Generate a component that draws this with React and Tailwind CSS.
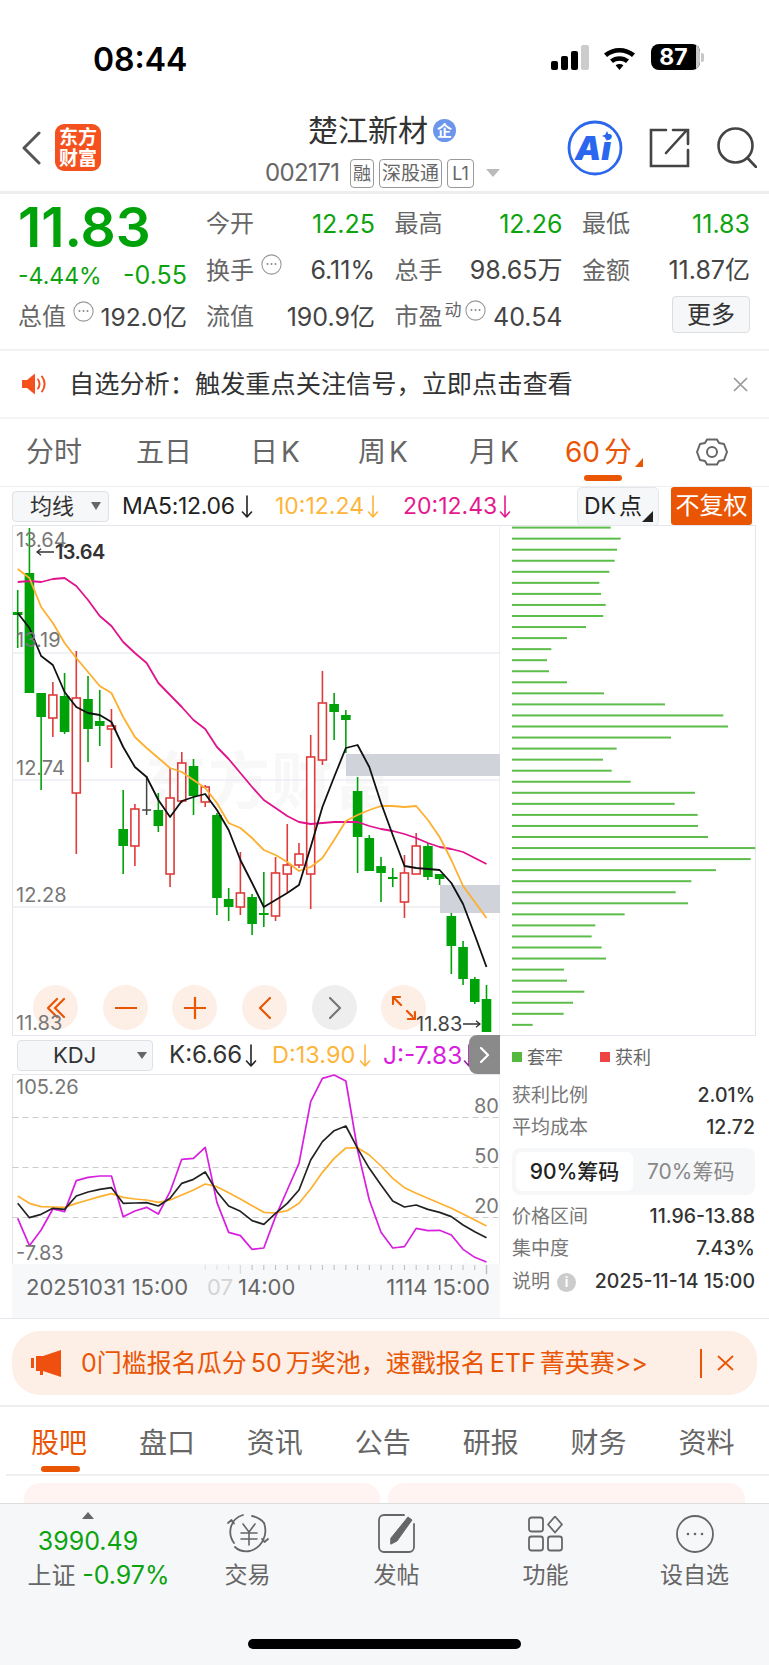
import React from "react";

const UP = "#df3b3b";
const DOWN = "#00a20a";
const ORANGE = "#ea5504";
const slot = (i) => 17.7 + 11.72 * i;

// wickTop, wickBottom, bodyTop, bodyBottom, kind (d = falling, u = rising, x = flat)
const candles = [
  [590, 648, 612, 615, "d"], [528, 693, 573, 693, "d"], [693, 790, 693, 717, "d"], [682, 737, 695, 718, "u"],
  [673, 734, 696, 732, "d"], [651, 854, 698, 793, "u"], [676, 762, 699, 729, "d"], [690, 746, 721, 726, "d"],
  [709, 768, 726, 729, "u"], [790, 874, 829, 846, "d"], [804, 866, 809, 846, "u"], [776, 815, 810, 811, "x"],
  [793, 832, 810, 826, "d"], [768, 887, 798, 874, "u"], [752, 803, 763, 801, "u"], [759, 815, 766, 796, "d"],
  [785, 807, 787, 802, "u"], [813, 915, 815, 898, "d"], [888, 921, 899, 907, "d"], [852, 915, 893, 907, "u"],
  [894, 935, 897, 924, "d"], [872, 927, 913, 915, "d"], [857, 921, 873, 916, "u"], [824, 893, 865, 874, "u"],
  [843, 868, 854, 865, "u"], [735, 909, 757, 874, "u"], [671, 765, 703, 760, "u"], [693, 740, 704, 712, "d"],
  [710, 753, 715, 720, "d"], [777, 873, 791, 837, "d"], [835, 871, 838, 871, "d"], [857, 902, 866, 873, "d"],
  [868, 887, 877, 879, "d"], [855, 918, 873, 902, "u"], [833, 874, 846, 874, "u"], [843, 880, 846, 877, "d"],
  [874, 885, 874, 879, "d"], [913, 974, 916, 946, "d"], [941, 985, 947, 979, "d"], [977, 1004, 979, 1002, "d"],
  [985, 1032, 999, 1032, "d"],
];

const ma5 = [613, 628, 656, 665, 692, 707, 713, 715, 722, 747, 767, 777, 800, 817, 801, 797, 794, 810, 830, 860, 883, 907, 900, 893, 885, 847, 807, 777, 748, 745, 767, 803, 835, 866, 868, 869, 870, 883, 904, 935, 967];
const ma10 = [569, 578, 607, 623, 643, 658, 672, 686, 693, 717, 737, 748, 758, 768, 772, 780, 788, 803, 823, 828, 838, 850, 855, 862, 871, 867, 858, 840, 821, 815, 810, 806, 806, 807, 806, 820, 837, 860, 886, 902, 918];
const ma20 = [582, 581, 582, 579, 578, 586, 600, 616, 626, 642, 653, 663, 683, 695, 707, 720, 729, 747, 759, 773, 787, 800, 808, 816, 822, 824, 823, 822, 822, 822, 826, 829, 831, 834, 838, 843, 847, 849, 852, 858, 864];

const kLine = [490, 533, 523, 505, 508, 468, 456, 448, 443, 490, 489, 488, 498, 475, 430, 418, 396, 455, 498, 514, 542, 553, 520, 490, 450, 360, 305, 272, 258, 325, 385, 435, 483, 501, 495, 508, 517, 530, 555, 575, 593];
const dLine = [468, 490, 500, 501, 502, 490, 480, 470, 461, 472, 477, 480, 487, 480, 465, 450, 432, 440, 458, 477, 497, 517, 519, 512, 490, 447, 397, 355, 324, 323, 345, 378, 415, 443, 460, 475, 490, 505, 522, 540, 558];
const jLine = [535, 617, 570, 507, 515, 422, 412, 408, 408, 530, 513, 502, 522, 455, 358, 355, 322, 487, 577, 587, 628, 624, 530, 450, 370, 185, 115, 105, 123, 330, 480, 577, 624, 620, 565, 572, 571, 585, 628, 652, 666];

// distribution bar ends, top row first
const chipEnds = [332, 362, 351, 344, 328, 298, 303, 317, 310, 258, 201, 154, 141, 147, 201, 312, 495, 670, 684, 513, 350, 309, 335, 392, 585, 524, 593, 594, 624, 766, 752, 648, 574, 527, 564, 374, 286, 275, 305, 318, 192, 201, 253, 219, 191, 98];

const pricePoints = (ys) => ys.map((y, i) => `${slot(i)},${y}`).join(" ");
const kdjPoints = (ys) => ys.map((z, i) => `${slot(i)},${1040 + z / 3}`).join(" ");

function Down({ color, className = "" }) {
  return (
    <svg width="12" height="25" viewBox="0 0 12 25" className={`shrink-0 ${className}`} fill="none" stroke={color} strokeWidth="1.6" strokeLinecap="round" strokeLinejoin="round">
      <path d="M6 2v21M1.500 18L6 23l4.500-5" />
    </svg>
  );
}

function Dots({ className = "" }) {
  return (
    <svg width="21" height="21" viewBox="0 0 21 21" className={`shrink-0 ${className}`} fill="none">
      <circle cx="10.5" cy="10.5" r="9.6" stroke="#999" strokeWidth="1.1" />
      <circle cx="6.5" cy="10" r="1" fill="#888" />
      <circle cx="10.5" cy="10" r="1" fill="#888" />
      <circle cx="14.5" cy="10" r="1" fill="#888" />
    </svg>
  );
}

function Stat({ label, value, green, extra }) {
  return (
    <div className="flex items-center justify-between whitespace-nowrap">
      <div className="flex items-center text-[#666] text-[24px]">
        <span>{label}</span>
        {extra}
      </div>
      <span className={`text-[25px] ${green ? "text-[#0da30f]" : "text-[#444]"}`}>{value}</span>
    </div>
  );
}

function StatusBar() {
  return (
    <div className="h-[100px] flex items-start justify-between">
      <div className="ml-[93px] mt-[37px] text-[32px] leading-[46px] font-semibold text-black">08:44</div>
      <div className="flex items-center mt-[44px] mr-[65px]">
        <svg width="38" height="25" viewBox="0 0 38 25">
          <rect x="0" y="16" width="7" height="9" rx="2" fill="#000" />
          <rect x="10" y="11" width="7" height="14" rx="2" fill="#000" />
          <rect x="20" y="6" width="7" height="19" rx="2" fill="#000" />
          <rect x="30" y="0" width="8" height="25" rx="2" fill="#ccc" />
        </svg>
        <svg width="33" height="25" viewBox="0 0 33 25" className="ml-[14px]">
          <path d="M1 8.5C9.6 1 23.4 1 32 8.5l-3 3.4C22 5.900 11 5.900 4 11.900z" fill="#000" />
          <path d="M7 14.600c5.400-4.600 13.600-4.600 19 0l-3 3.400c-3.800-3-9.200-3-13 0z" fill="#000" />
          <path d="M12.600 20.200c2.400-1.600 5.400-1.600 7.800 0L16.500 25z" fill="#000" />
        </svg>
        <div className="ml-[15px] flex items-center">
          <div className="w-[49px] h-[26px] rounded-[8px] bg-black flex overflow-hidden relative">
            <span className="w-[45px] text-center text-white text-[23px] leading-[26px] font-bold">87</span>
            <span className="w-[4px] bg-[#c8c8c8]" />
          </div>
          <div className="w-[3px] h-[9px] ml-[1px] rounded-r-[2px] bg-[#c8c8c8]" />
        </div>
      </div>
    </div>
  );
}

function NavBar() {
  return (
    <div className="h-[94px] flex border-b-[3px] border-[#eeeeee]">
      <div className="w-[101px] shrink-0 flex items-start">
        <svg width="20" height="34" viewBox="0 0 20 34" className="ml-[21px] mt-[31px]" fill="none" stroke="#555" strokeWidth="3" strokeLinecap="round" strokeLinejoin="round">
          <path d="M18 2L3 17l15 15" />
        </svg>
        <div className="ml-[14px] mt-[24px] w-[46px] h-[47px] rounded-[9px] bg-[#f4511e] text-white text-[19px] leading-[21px] font-bold text-center flex flex-col justify-center">
          <span>东方</span>
          <span>财富</span>
        </div>
      </div>
      <div className="w-[466px] flex flex-col items-start">
        <div className="ml-[207px] mt-[13px] flex items-center h-[35px]">
          <span className="text-[30px] leading-[35px] text-[#333] whitespace-nowrap">楚江新材</span>
          <span className="ml-[5px] w-[23px] h-[23px] rounded-full bg-[#6b96ec] text-white text-[15px] leading-[23px] text-center font-bold">企</span>
        </div>
        <div className="ml-[164px] mt-[10px] flex items-center text-[#666]">
          <span className="text-[24px] leading-[30px] w-[85px] tracking-[-0.6px]">002171</span>
          <span className="w-[24px] h-[29px] rounded-[4px] border border-[#999] text-[18px] leading-[27px] text-center">融</span>
          <span className="ml-[5px] w-[63px] h-[29px] rounded-[4px] border border-[#999] text-[19px] leading-[27px] text-center whitespace-nowrap overflow-hidden">深股通</span>
          <span className="ml-[5px] w-[27px] h-[29px] rounded-[4px] border border-[#999] text-[18px] leading-[27px] text-center">L1</span>
          <span className="ml-[12px] w-0 h-0 border-l-[7px] border-r-[7px] border-t-[8px] border-l-transparent border-r-transparent border-t-[#bbb]" />
        </div>
      </div>
      <div className="flex items-start">
        <svg width="56" height="56" viewBox="0 0 56 56" className="mt-[20px]">
          <circle cx="28" cy="28" r="26" fill="#fff" stroke="#2b67ee" strokeWidth="2.8" />
          <text x="26" y="40" textAnchor="middle" fontFamily="Inter, sans-serif" fontWeight="900" fontStyle="italic" fontSize="33" fill="#2b67ee">Ai</text>
          <path d="M40 11l1.600 3.400L45 16l-3.400 1.600L40 21l-1.600-3.400L35 16l3.400-1.600z" fill="#2b67ee" />
        </svg>
        <svg width="41" height="40" viewBox="0 0 41 40" className="ml-[26px] mt-[28px]" fill="none" stroke="#444" strokeWidth="2.6" strokeLinecap="round">
          <path d="M17 2H2v36h37V22" />
          <path d="M17 25L37 3M24 2h15v14" />
        </svg>
        <svg width="40" height="41" viewBox="0 0 40 41" className="ml-[27px] mt-[27px]" fill="none" stroke="#444" strokeWidth="2.6" strokeLinecap="round">
          <circle cx="18.5" cy="18.5" r="17" />
          <path d="M30.5 31L39 40" />
        </svg>
      </div>
    </div>
  );
}

function Quote() {
  return (
    <div className="h-[157px] flex pl-[18px] border-b-[2px] border-[#f2f2f2]">
      <div className="w-[169px] shrink-0 whitespace-nowrap">
        <div className="mt-[3px] text-[55px] leading-[60px] font-semibold text-[#00a20a]">11.83</div>
        <div className="mt-[6px] flex justify-between items-center text-[#0da30f] h-[26px]">
          <span className="text-[23px]">-4.44%</span>
          <span className="text-[25px]">-0.55</span>
        </div>
        <div className="mt-[5px] flex items-center justify-between h-[46px]">
          <div className="flex items-center text-[24px] text-[#666]">
            总值
            <Dots className="ml-[7px] -mt-[12px]" />
          </div>
          <span className="text-[24.500px] text-[#444]">192.0亿</span>
        </div>
      </div>
      <div className="ml-[19px] w-[544px] grid grid-cols-[169px_168px_168px] gap-x-[19.5px] grid-rows-[46.5px_46.5px_46.5px] mt-[7px]">
        <Stat label="今开" value="12.25" green />
        <Stat label="最高" value="12.26" green />
        <Stat label="最低" value="11.83" green />
        <Stat label="换手" value="6.11%" extra={<Dots className="ml-[7px] -mt-[12px]" />} />
        <Stat label="总手" value="98.65万" />
        <Stat label="金额" value="11.87亿" />
        <Stat label="流值" value="190.9亿" />
        <Stat
          label="市盈"
          value="40.54"
          extra={
            <span className="flex items-center -mt-[14px] ml-[2px]">
              <span className="text-[17px] leading-[20px]">动</span>
              <Dots className="ml-[3px]" />
            </span>
          }
        />
        <div className="flex justify-end items-start">
          <span className="mt-[2px] w-[78px] h-[37px] rounded-[4px] border border-[#dddddd] bg-[#f6f7f9] text-[24px] leading-[35px] text-center text-[#333]">更多</span>
        </div>
      </div>
    </div>
  );
}

function Notice() {
  return (
    <div className="h-[68px] flex items-center pl-[22px] border-b-[2px] border-[#f5f5f5]">
      <svg width="26" height="22" viewBox="0 0 26 22">
        <path d="M0 7h5l8-6.500v21L5 15H0z" fill="#f4511e" />
        <path d="M16 6.500c2 2.500 2 6.500 0 9M20 3.500c3.500 4.500 3.500 10.500 0 15" fill="none" stroke="#f4511e" strokeWidth="2" strokeLinecap="round" />
      </svg>
      <span className="ml-[21px] text-[25.200px] leading-[30px] text-[#333] whitespace-nowrap">自选分析：触发重点关注信号，立即点击查看</span>
      <svg width="15" height="15" viewBox="0 0 15 15" className="ml-auto mr-[21px]" fill="none" stroke="#999" strokeWidth="1.7">
        <path d="M1 1l13 13M14 1L1 14" />
      </svg>
    </div>
  );
}

function PeriodTabs() {
  return (
    <div className="h-[68px] flex items-start pl-[26px] border-b border-[#eeeeee] text-[28px] leading-[36px] text-[#666] whitespace-nowrap">
      <span className="mt-[15px] w-[110px]">分时</span>
      <span className="mt-[15px] w-[114px]">五日</span>
      <span className="mt-[15px] w-[108px]">日<span className="ml-[3px]">K</span></span>
      <span className="mt-[15px] w-[111px]">周<span className="ml-[3px]">K</span></span>
      <span className="mt-[15px] w-[96px]">月<span className="ml-[3px]">K</span></span>
      <div className="relative mt-[15px] w-[131px] h-[52px] text-[#ea5504]">
        <span>60<span className="ml-[4px]">分</span></span>
        <svg width="8" height="9" viewBox="0 0 8 9" className="absolute left-[70px] top-[24px]"><path d="M8 0v9H0z" fill="#ea5504" /></svg>
        <span className="absolute left-[19px] top-[41px] w-[38px] h-[6px] rounded-full bg-[#ea5504]" />
      </div>
      <svg width="32" height="30" viewBox="0 0 32 30" className="mt-[18px]" fill="none" stroke="#666" strokeWidth="2" strokeLinejoin="round">
        <path d="M11 2.500h10l2 3.500 5 1 3 8-3 8-5 1-2 3.500H11l-2-3.500-5-1-3-8 3-8 5-1z" />
        <circle cx="16" cy="15" r="5" />
      </svg>
    </div>
  );
}

function MaBar() {
  return (
    <div className="h-[38px] flex items-center relative text-[23px] whitespace-nowrap">
      <div className="ml-[12px] w-[97px] h-[31px] rounded-[4px] border border-[#dfe1e6] bg-[#f6f7f9] flex items-center">
        <span className="ml-[17px] text-[#333] text-[22px] leading-[29px]">均线</span>
        <span className="ml-[17px] w-0 h-0 border-l-[5px] border-r-[5px] border-t-[8px] border-l-transparent border-r-transparent border-t-[#666]" />
      </div>
      <div className="ml-[13px] w-[153px] flex items-center text-[#222]"><span className="tracking-[-0.3px]">MA5:12.06</span><Down color="#222" className="ml-[6px]" /></div>
      <div className="w-[128px] flex items-center text-[#fdb53c]"><span>10:12.24</span><Down color="#fdb53c" className="ml-[3px]" /></div>
      <div className="flex items-center text-[#e5198f]"><span>20:12.43</span><Down color="#e5198f" className="ml-[2px]" /></div>
      <div className="absolute left-[577px] top-0 w-[82px] h-[39px] rounded-[5px] border border-[#e5e7ec] bg-[#f6f7f9] text-[#222] text-[23px] leading-[37px] pl-[6px]">
        DK<span className="ml-[3px]">点</span>
        <svg width="11" height="11" viewBox="0 0 11 11" className="absolute right-[5px] bottom-[3px]"><path d="M11 0v11H0z" fill="#222" /></svg>
      </div>
      <div className="absolute left-[671px] top-0 w-[81px] h-[38px] rounded-[3px] bg-[#ea5504] text-white text-[24px] leading-[38px] text-center">不复权</div>
    </div>
  );
}

function RoundButton({ children, gray, className }) {
  return (
    <span className={`absolute top-[460px] w-[45px] h-[45px] rounded-full flex items-center justify-center ${gray ? "bg-[#eeeeee]" : "bg-[#fdeee6]"} ${className}`}>
      {children}
    </span>
  );
}

function PriceChart() {
  const icon = { fill: "none", stroke: ORANGE, strokeWidth: 2.2, strokeLinecap: "round", strokeLinejoin: "round" };
  return (
    <div className="relative h-[511px] w-[488px] text-[20px] leading-[18px] text-[#777] whitespace-nowrap">
      <span className="absolute left-[133px] top-[222px] text-[62px] leading-[70px] tracking-[1px] text-[#f8f8f9] font-bold">东方财富</span>
      <svg width="488" height="511" viewBox="12 525 488 511" className="absolute inset-0" fill="none">
        <path d="M12.500 525.500H500M12.500 525.500V1036M12.500 1035.500H500M12.500 653H500M12.500 780H500M12.500 907H500M500 525V1036" stroke="#e3e6ec" strokeWidth="1.200" />
        <rect x="346" y="754" width="154" height="22" fill="#d0d3d9" />
        <rect x="440" y="885" width="60" height="28" fill="#d0d3d9" />
        {candles.map(([wt, wb, bt, bb, kind], i) => {
          const x = slot(i);
          if (kind === "x") {
            return <path key={i} d={`M${x} ${wt}V${wb}M${x - 4.500} ${bt}H${x + 4.500}`} stroke="#444" strokeWidth="1.500" />;
          }
          if (kind === "u") {
            return (
              <g key={i}>
                <path d={`M${x} ${wt}V${wb}`} stroke={UP} strokeWidth="1.600" />
                <rect x={x - 4} y={bt} width="8" height={bb - bt} fill="#fff" stroke={UP} strokeWidth="1.600" />
              </g>
            );
          }
          return (
            <g key={i}>
              <path d={`M${x} ${wt}V${wb}`} stroke={DOWN} strokeWidth="1.600" />
              <rect x={x - 4.800} y={bt} width="9.600" height={bb - bt} fill={DOWN} />
            </g>
          );
        })}
        <polyline points={pricePoints(ma20)} stroke="#e0128c" strokeWidth="1.800" strokeLinejoin="round" />
        <polyline points={pricePoints(ma10)} stroke="#fdb02f" strokeWidth="1.800" strokeLinejoin="round" />
        <polyline points={pricePoints(ma5)} stroke="#111" strokeWidth="1.800" strokeLinejoin="round" />
      </svg>

      <RoundButton className="left-[21px]">
        <svg width="20" height="22" viewBox="0 0 20 22" {...icon}><path d="M11 2L2 11l9 9M18 2l-9 9 9 9" /></svg>
      </RoundButton>
      <RoundButton className="left-[91px]">
        <svg width="22" height="4" viewBox="0 0 22 4" {...icon}><path d="M0 2h22" /></svg>
      </RoundButton>
      <RoundButton className="left-[160px]">
        <svg width="22" height="22" viewBox="0 0 22 22" {...icon}><path d="M0 11h22M11 0v22" /></svg>
      </RoundButton>
      <RoundButton className="left-[230px]">
        <svg width="12" height="22" viewBox="0 0 12 22" {...icon}><path d="M11 1L1 11l10 10" /></svg>
      </RoundButton>
      <RoundButton className="left-[300px]" gray>
        <svg width="12" height="22" viewBox="0 0 12 22" fill="none" stroke="#777" strokeWidth="2.200" strokeLinecap="round" strokeLinejoin="round"><path d="M1 1l10 10L1 21" /></svg>
      </RoundButton>
      <RoundButton className="left-[369px]">
        <svg width="24" height="24" viewBox="0 0 24 24" {...icon}><path d="M1 8V1h7M1 1l8 8M23 16v7h-7M23 23l-8-8" /></svg>
      </RoundButton>

      <span className="absolute left-[4px] top-[6px]">13.64</span>
      <span className="absolute left-[24px] top-[18px] flex items-center font-semibold text-[#333] tracking-[-0.6px]">
        <svg width="18" height="8" viewBox="0 0 18 8" className="mr-[1px]" fill="none" stroke="#333" strokeWidth="1.300"><path d="M18 4H1M5 .8L1 4l4 3.200" /></svg>
        13.64
      </span>
      <span className="absolute left-[4px] top-[106px]">13.19</span>
      <span className="absolute left-[4px] top-[234px]">12.74</span>
      <span className="absolute left-[4px] top-[361px]">12.28</span>
      <span className="absolute left-[4px] top-[489px]">11.83</span>
      <span className="absolute left-[404px] top-[490px] flex items-center text-[#444]">
        11.83
        <svg width="18" height="8" viewBox="0 0 18 8" className="ml-[1px]" fill="none" stroke="#333" strokeWidth="1.300"><path d="M0 4h17M13 .8L17 4l-4 3.200" /></svg>
      </span>
    </div>
  );
}

function KdjBar() {
  return (
    <div className="h-[38px] relative flex items-center whitespace-nowrap text-[24px]">
      <div className="ml-[5px] w-[136px] h-[31px] rounded-[4px] border border-[#dfe1e6] bg-[#f6f7f9] flex items-center text-[#333] text-[22px]">
        <span className="ml-[35px]">KDJ</span>
        <span className="ml-[41px] w-0 h-0 border-l-[5px] border-r-[5px] border-t-[7px] border-l-transparent border-r-transparent border-t-[#666]" />
      </div>
      <div className="ml-[16px] w-[103px] flex items-center text-[#333]"><span>K:6.66</span><Down color="#222" className="ml-[3px]" /></div>
      <div className="w-[111px] flex items-center text-[#fdb53c] text-[23.500px]"><span>D:13.90</span><Down color="#fdb53c" className="ml-[4px]" /></div>
      <div className="flex items-center text-[#d81fdf] text-[24.500px]"><span>J:-7.83</span><Down color="#9a1aa0" className="ml-[1px]" /></div>
      <div className="absolute right-0 top-[-1px] w-[31px] h-[39px] bg-[#8a8a8a] rounded-tl-[8px] rounded-bl-[8px] flex items-center justify-center">
        <svg width="11" height="16" viewBox="0 0 11 16" fill="none" stroke="#fff" strokeWidth="2.200" strokeLinecap="round" strokeLinejoin="round"><path d="M2 1l7 7-7 7" /></svg>
      </div>
    </div>
  );
}

function KdjChart() {
  return (
    <div className="relative h-[190px] w-[488px] text-[20px] leading-[18px] text-[#777] whitespace-nowrap">
      <svg width="488" height="190" viewBox="12 1074 488 190" className="absolute inset-0" fill="none">
        <path d="M12.500 1074.500H500M12.500 1074V1264M500 1074V1264" stroke="#e3e6ec" strokeWidth="1.200" />
        <path d="M12.500 1117.500H500M12.500 1167.500H500M12.500 1217.500H500" stroke="#cccccc" strokeWidth="1.200" strokeDasharray="6 4" />
        <polyline points={kdjPoints(dLine)} stroke="#fdb02f" strokeWidth="1.700" strokeLinejoin="round" />
        <polyline points={kdjPoints(jLine)} stroke="#d81fdf" strokeWidth="1.700" strokeLinejoin="round" />
        <polyline points={kdjPoints(kLine)} stroke="#222" strokeWidth="1.700" strokeLinejoin="round" />
      </svg>
      <span className="absolute left-[4px] top-[4px]">105.26</span>
      <span className="absolute left-[4px] top-[170px]">-7.83</span>
      <span className="absolute right-[1px] top-[23px]">80</span>
      <span className="absolute right-[1px] top-[73px]">50</span>
      <span className="absolute right-[1px] top-[123px]">20</span>
    </div>
  );
}

function TimeStrip() {
  return (
    <div className="relative h-[54px] w-[488px] bg-[#f7f8fa] text-[22px] leading-[22px] text-[#666] whitespace-nowrap">
      <svg width="488" height="12" viewBox="12 1264 488 12" className="absolute left-0 top-0" fill="none">
        {candles.map((_, i) => {
          const x = slot(i);
          if (i < 16) return null;
          const tall = i === 19 || i === 40;
          const faint = i < 20;
          return <path key={i} d={`M${x} 1265V${tall ? 1274 : 1270}`} stroke={faint ? "#ddd" : "#bbb"} strokeWidth={tall ? 1.4 : 1} />;
        })}
      </svg>
      <span className="absolute left-[14px] top-[12px]">20251031 15:00</span>
      <span className="absolute left-[195px] top-[12px] text-[#d4d4d4]">07</span>
      <span className="absolute left-[226px] top-[12px]">14:00</span>
      <span className="absolute right-[10px] top-[12px]">1114 15:00</span>
    </div>
  );
}

function InfoRow({ label, value }) {
  return (
    <div className="flex items-center justify-between whitespace-nowrap h-[32px]">
      <span className="text-[19px] text-[#777]">{label}</span>
      <span className="text-[19.500px] font-medium text-[#333]">{value}</span>
    </div>
  );
}

function ChipPanel() {
  return (
    <div className="w-[256px] shrink-0">
      <svg width="256" height="511" viewBox="500 525 256 511" className="block" fill="none">
        <path d="M500 525.500H755.500V1035.500H500" stroke="#e3e6ec" strokeWidth="1.200" />
        {chipEnds.map((end, i) => (
          <rect key={i} x="512" y={526.6 + i * 11.05} width={(end - 36) / 3} height="2" fill="#5dbd4a" />
        ))}
      </svg>
      <div className="pl-[12px] pr-[1px]">
        <div className="mt-[6px] h-[30px] flex items-center text-[18px] text-[#666]">
          <span className="w-[10px] h-[10px] bg-[#55b93f]" />
          <span className="ml-[5px]">套牢</span>
          <span className="ml-[37px] w-[10px] h-[10px] bg-[#ef4444]" />
          <span className="ml-[5px]">获利</span>
        </div>
        <div className="mt-[8px]">
          <InfoRow label="获利比例" value="2.01%" />
          <InfoRow label="平均成本" value="12.72" />
        </div>
        <div className="mt-[4px] h-[47px] rounded-[8px] bg-[#f6f7f9] flex items-center pl-[4px] text-[21px] whitespace-nowrap">
          <span className="w-[117px] h-[39px] rounded-[6px] bg-white text-center leading-[39px] text-[#222] font-medium">90%筹码</span>
          <span className="ml-[14px] text-[#888]">70%筹码</span>
        </div>
        <div className="mt-[6px]">
          <InfoRow label="价格区间" value="11.96-13.88" />
          <InfoRow label="集中度" value="7.43%" />
          <div className="flex items-center justify-between h-[34px] whitespace-nowrap">
            <span className="flex items-center text-[19px] text-[#777]">
              说明
              <span className="ml-[7px] w-[19px] h-[19px] rounded-full bg-[#cccccc] text-white text-[13px] leading-[19px] text-center font-bold">i</span>
            </span>
            <span className="text-[19.500px] font-medium text-[#333]">2025-11-14 15:00</span>
          </div>
        </div>
      </div>
    </div>
  );
}

function PromoBanner() {
  return (
    <div className="mt-[12px] mx-[12px] h-[64px] rounded-[28px] bg-[#fdeee6] flex items-center text-[#ea5504] whitespace-nowrap">
      <svg width="30" height="27" viewBox="0 0 30 27" className="ml-[19px]">
        <path d="M0 8h3v10H0zM5 6h7L30 0v27l-18-6v4h-3v-4H5z" fill="#f0500f" />
      </svg>
      <span className="ml-[20px] text-[25px] leading-[28px] [word-spacing:-3px]">0门槛报名瓜分 50 万奖池，速戳报名 ETF 菁英赛&gt;&gt;</span>
      <span className="absolute left-[700px] w-[1.500px] h-[29px] bg-[#ea5504]" />
      <svg width="17" height="16" viewBox="0 0 17 16" className="absolute left-[717px]" fill="none" stroke="#ea5504" strokeWidth="1.800"><path d="M1 1l15 14M16 1L1 15" /></svg>
    </div>
  );
}

function StockTabs() {
  const tabs = ["股吧", "盘口", "资讯", "公告", "研报", "财务", "资料"];
  return (
    <div>
      <div className="mt-[10px] border-t-[2px] border-[#eeeeee] h-[69px] flex pl-[31px] gap-[51.900px] text-[28px] leading-[36px] text-[#666] whitespace-nowrap">
        {tabs.map((t, i) => (
          <div key={t} className={`relative pt-[18px] ${i === 0 ? "text-[#ea5504]" : ""}`}>
            {t}
            {i === 0 && <span className="absolute left-[10px] top-[59px] w-[39px] h-[6px] rounded-full bg-[#ea5504]" />}
          </div>
        ))}
      </div>
      <div className="ml-[6px] h-[2px] bg-[#efefef]" />
      <div className="flex pl-[24px] gap-[8px] mt-[7px] h-[20px]">
        <div className="w-[356px] rounded-t-[16px] bg-[#fff4f1]" />
        <div className="w-[357px] rounded-t-[16px] bg-[#fff4f1]" />
      </div>
    </div>
  );
}

function BottomItem({ label, children }) {
  return (
    <div className="flex flex-col items-center">
      <div className="h-[49px] flex items-end">{children}</div>
      <span className="mt-[6px] text-[23px] leading-[32px] text-[#666] whitespace-nowrap">{label}</span>
    </div>
  );
}

function BottomBar() {
  return (
    <div className="h-[162px] bg-[#f6f7f9] border-t border-[#dddddd] relative">
      <div className="pl-[24px] grid grid-cols-[repeat(5,149px)]">
        <div className="flex flex-col items-center">
          <span className="-ml-[21px] mt-[8px] w-0 h-0 border-l-[6px] border-r-[6px] border-b-[7px] border-l-transparent border-r-transparent border-b-[#666]" />
          <span className="-ml-[21px] mt-[8px] text-[25px] leading-[28px] text-[#0da30f]">3990.49</span>
          <span className="mt-[4px] text-[25px] leading-[32px] whitespace-nowrap text-[#0da30f]"><span className="text-[#666] text-[24px]">上证 </span>-0.97%</span>
        </div>
        <BottomItem label="交易">
          <svg width="44" height="40" viewBox="0 0 44 40" fill="none" stroke="#666" strokeWidth="1.800" strokeLinecap="round" strokeLinejoin="round">
            <path d="M8 30C1 20 4 6 17 2" />
            <path d="M2 10l3.500-3 2.500 3.500" />
            <path d="M38 10c4 11-1 24-14 28-6 1-11 0-15-4" />
            <path d="M26 3c5 1 9 3 12 7" />
            <path d="M42 26l-3.500 3-2.500-3" />
            <path d="M17 11l6 8 6-8M15 20h16M15 26h16M23 19v13" strokeWidth="1.600" />
          </svg>
        </BottomItem>
        <BottomItem label="发帖">
          <svg width="38" height="40" viewBox="0 0 38 40" fill="none" stroke="#666" strokeWidth="1.800" strokeLinecap="round" strokeLinejoin="round">
            <path d="M26 2H6a5 5 0 0 0-5 5v27a5 5 0 0 0 5 5h25a5 5 0 0 0 5-5V11" />
            <path d="M13 25L30 4l4 3-15 21-6 3z" fill="#666" strokeWidth="1" />
          </svg>
        </BottomItem>
        <BottomItem label="功能">
          <svg width="35" height="36" viewBox="0 0 35 36" fill="none" stroke="#666" strokeWidth="1.800" strokeLinejoin="round" className="mb-[1px]">
            <rect x="1" y="1.500" width="14" height="14" rx="2.500" />
            <rect x="1" y="20.500" width="14" height="14" rx="2.500" />
            <rect x="20" y="20.500" width="14" height="14" rx="2.500" />
            <path d="M27 0.500l7 8-7 8-7-8z" />
          </svg>
        </BottomItem>
        <BottomItem label="设自选">
          <svg width="38" height="38" viewBox="0 0 38 38" fill="none" stroke="#666" strokeWidth="1.800">
            <circle cx="19" cy="19" r="18" />
            <circle cx="12" cy="19" r="1.300" fill="#666" stroke="none" />
            <circle cx="19" cy="19" r="1.300" fill="#666" stroke="none" />
            <circle cx="26" cy="19" r="1.300" fill="#666" stroke="none" />
          </svg>
        </BottomItem>
      </div>
      <div className="absolute left-[248px] top-[135px] w-[273px] h-[10px] rounded-full bg-black" />
    </div>
  );
}

export default function App() {
  return (
    <div className="w-[769px] h-[1665px] overflow-hidden bg-white font-['Inter','Noto_Sans_CJK_SC',sans-serif]">
      <StatusBar />
      <NavBar />
      <Quote />
      <Notice />
      <PeriodTabs />
      <MaBar />
      <div className="flex ml-[12px] w-[744px]">
        <div className="w-[488px] shrink-0">
          <PriceChart />
          <KdjBar />
          <KdjChart />
          <TimeStrip />
        </div>
        <ChipPanel />
      </div>
      <div className="h-[1px] bg-[#e6e6ec]" />
      <div className="relative">
        <PromoBanner />
      </div>
      <StockTabs />
      <BottomBar />
    </div>
  );
}
